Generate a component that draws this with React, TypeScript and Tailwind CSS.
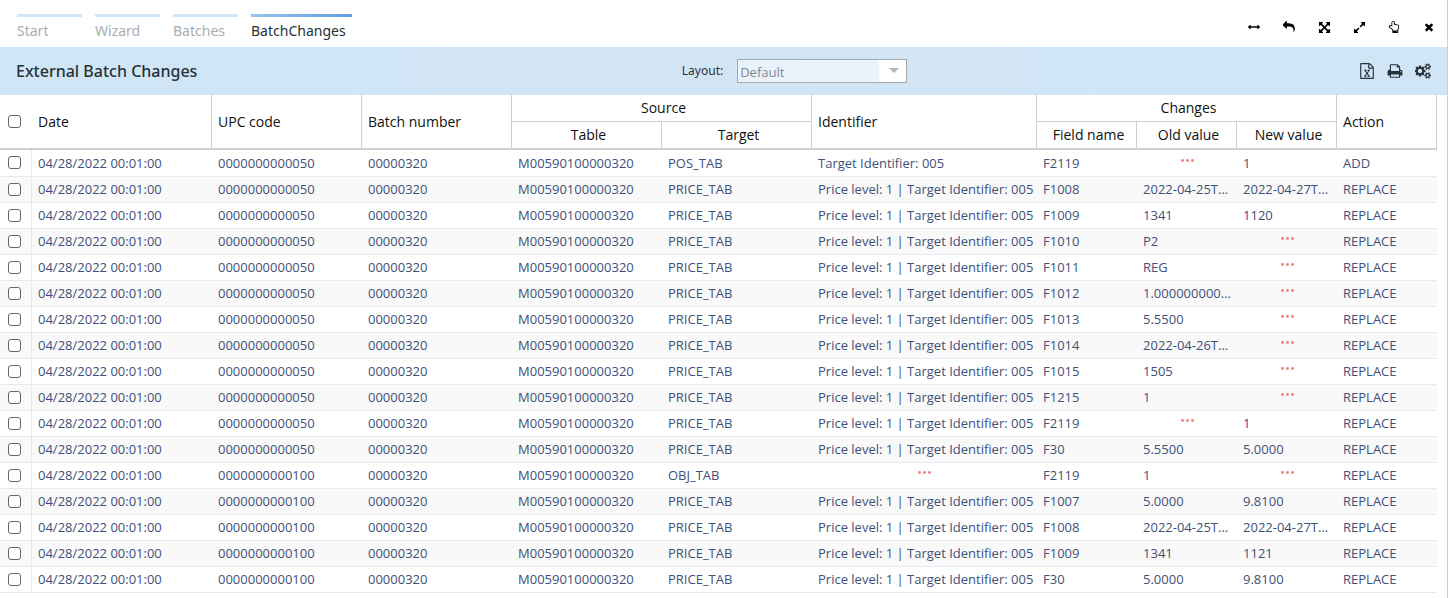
import type { ReactNode } from 'react';

const ICONS = {
  horizontal:
    'M1792 896q0 26-19 45l-256 256q-19 19-45 19t-45-19-19-45v-128h-1024v128q0 26-19 45t-45 19-45-19l-256-256q-19-19-19-45t19-45l256-256q19-19 45-19t45 19 19 45v128h1024v-128q0-26 19-45t45-19 45 19l256 256q19 19 19 45z',
  reply:
    'M1792 1120q0 166-127 451-3 7-10.5 24t-13.5 30-13 22q-12 17-28 17-15 0-23.5-10t-8.5-25q0-9 2.5-26.5t2.5-23.5q5-68 5-123 0-112-19.5-200.5t-54-153.5-89-112-117-80-146-48.5-166.5-24-189-6.5h-224v256q0 26-19 45t-45 19-45-19l-512-512q-19-19-19-45t19-45l512-512q19-19 45-19t45 19 19 45v256h224q713 0 875 403 53 134 53 333z',
  arrows:
    'M1411 541l-355 355 355 355 144-144q29-31 70-14 39 17 39 59v448q0 26-19 45t-45 19h-448q-42 0-59-40-17-39 14-69l144-144-355-355-355 355 144 144q31 30 14 69-17 40-59 40h-448q-26 0-45-19t-19-45v-448q0-42 40-59 39-17 69 14l144 144 355-355-355-355-144 144q-19 19-45 19-12 0-24-5-40-17-40-59v-448q0-26 19-45t45-19h448q42 0 59 40 17 39-14 69l-144 144 355 355 355-355-144-144q-31-30-14-69 17-40 59-40h448q26 0 45 19t19 45v448q0 42-39 59-13 5-25 5-26 0-45-19z',
  expand:
    'M883 1056q0 13-10 23l-332 332 144 144q19 19 19 45t-19 45-45 19h-448q-26 0-45-19t-19-45v-448q0-26 19-45t45-19 45 19l144 144 332-332q10-10 23-10t23 10l114 114q10 10 10 23zm781-864v448q0 26-19 45t-45 19-45-19l-144-144-332 332q-10 10-23 10t-23-10l-114-114q-10-10-10-23t10-23l332-332-144-144q-19-19-19-45t19-45 45-19h448q26 0 45 19t19 45z',
  hand:
    'M1408 1600q0-26-19-45t-45-19-45 19-19 45 19 45 45 19 45-19 19-45zm128-764q0-189-167-189-26 0-56 5-16-30-52.5-47.5t-73.5-17.5-69 18q-50-53-119-53-25 0-55.5 10t-47.5 25v-331q0-52-38-90t-90-38q-51 0-89.5 39t-38.5 89v576q-20 0-48.5-15t-55-33-68-33-84.5-15q-67 0-97.5 44.5t-30.5 115.5q0 24 139 90 44 24 65 37 64 40 145 112 81 71 106 101 57 69 57 140v32h640v-32q0-72 32-167t64-193.5 32-179.5zm128-5q0 133-69 322-59 164-59 223v288q0 53-37.5 90.5t-90.5 37.5h-640q-53 0-90.5-37.5t-37.5-90.5v-288q0-10-4.5-21.5t-14-23.5-18-22.5-22.5-24-21.5-20.5-21.5-19-17-14q-74-65-129-100-21-13-62-33t-72-37-63-40.5-49.5-55-17.5-69.5q0-125 67-206.5t189-81.5q68 0 128 22v-374q0-104 77-180t179-76q105 0 181 75.5t76 180.5v169q62 4 119 37 21-3 43-3 101 0 178 60 139-1 219.5 85t80.5 227z',
  close:
    'M1490 1322q0 40-28 68l-136 136q-28 28-68 28t-68-28l-294-294-294 294q-28 28-68 28t-68-28l-136-136q-28-28-28-68t28-68l294-294-294-294q-28-28-28-68t28-68l136-136q28-28 68-28t68 28l294 294 294-294q28-28 68-28t68 28l136 136q28 28 28 68t-28 68l-294 294 294 294q28 28 28 68z',
  excel:
    'M1596 380q28 28 48 76t20 88v1152q0 40-28 68t-68 28h-1344q-40 0-68-28t-28-68v-1600q0-40 28-68t68-28h896q40 0 88 20t76 48zm-444-244v376h376q-10-29-22-41l-313-313q-12-12-41-22zm384 1528v-1024h-416q-40 0-68-28t-28-68v-416h-768v1536h1280zm-979-234v106h281v-106h-75l103-161q5-7 10-16.5t7.5-13.5 3.5-4h2q1 4 5 10 2 4 4.5 7.5t6 8 6.5 8.5l107 161h-76v106h291v-106h-68l-192-273 195-282h67v-107h-279v107h74l-103 159q-4 7-10 16.5t-9 13.5l-2 3h-2q-1-4-5-10-6-11-17-23l-106-159h76v-107h-290v107h68l189 272-194 283h-68z',
  print:
    'M448 1536h896v-256h-896v256zm0-640h896v-384h-160q-40 0-68-28t-28-68v-160h-640v640zm1152 64q0-26-19-45t-45-19-45 19-19 45 19 45 45 19 45-19 19-45zm128 0v416q0 13-9.5 22.5t-22.5 9.5h-224v160q0 40-28 68t-68 28h-960q-40 0-68-28t-28-68v-160h-224q-13 0-22.5-9.5t-9.5-22.5v-416q0-79 56.5-135.5t135.5-56.5h64v-544q0-40 28-68t68-28h672q40 0 88 20t76 48l152 152q28 28 48 76t20 88v256h64q79 0 135.5 56.5t56.5 135.5z',
  cogs:
    'M832 896q0-106-75-181t-181-75-181 75-75 181 75 181 181 75 181-75 75-181zm768 512q0-52-38-90t-90-38-90 38-38 90q0 53 37.5 90.5t90.5 37.5 90.5-37.5 37.5-90.5zm0-1024q0-52-38-90t-90-38-90 38-38 90q0 53 37.5 90.5t90.5 37.5 90.5-37.5 37.5-90.5zm-384 421v185q0 10-7 19.5t-16 10.5l-155 24q-11 35-32 76 34 48 90 115 7 11 7 20 0 12-7 19-23 30-82.5 89.5t-78.5 59.5q-11 0-21-7l-115-90q-37 19-77 31-11 108-23 155-7 24-30 24h-186q-11 0-20-7.5t-10-17.5l-23-153q-34-10-75-31l-118 89q-7 7-20 7-11 0-21-8-144-133-144-160 0-9 7-19 10-14 41-53t47-61q-23-44-35-82l-152-24q-10-1-17-9.5t-7-19.5v-185q0-10 7-19.5t16-10.5l155-24q11-35 32-76-34-48-90-115-7-11-7-20 0-12 7-20 22-30 82-89t79-59q11 0 21 7l115 90q34-18 77-32 11-108 23-154 7-24 30-24h186q11 0 20 7.5t10 17.5l23 153q34 10 75 31l118-89q8-7 20-7 11 0 21 8 144 133 144 160 0 8-7 19-12 16-42 54t-45 60q23 48 34 82l152 23q10 2 17 10.5t7 19.5zm640 533v140q0 16-149 31-12 27-30 52 51 113 51 138 0 4-4 7-122 71-124 71-8 0-46-47t-52-68q-20 2-30 2t-30-2q-14 21-52 68t-46 47q-2 0-124-71-4-3-4-7 0-25 51-138-18-25-30-52-149-15-149-31v-140q0-16 149-31 13-29 30-52-51-113-51-138 0-4 4-7 4-2 35-20t59-34 30-16q8 0 46 46.5t52 67.5q20-2 30-2t30 2q51-71 92-112l6-2q4 0 124 70 4 3 4 7 0 25-51 138 17 23 30 52 149 15 149 31zm0-1024v140q0 16-149 31-12 27-30 52 51 113 51 138 0 4-4 7-122 71-124 71-8 0-46-47t-52-68q-20 2-30 2t-30-2q-14 21-52 68t-46 47q-2 0-124-71-4-3-4-7 0-25 51-138-18-25-30-52-149-15-149-31v-140q0-16 149-31 13-29 30-52-51-113-51-138 0-4 4-7 4-2 35-20t59-34 30-16q8 0 46 46.5t52 67.5q20-2 30-2t30 2q51-71 92-112l6-2q4 0 124 70 4 3 4 7 0 25-51 138 17 23 30 52 149 15 149 31z',
};

function Glyph({ name, className }: { name: keyof typeof ICONS; className: string }) {
  return (
    <svg viewBox={name === 'cogs' ? '0 0 1856 1792' : '0 0 1792 1792'} className={className} fill="currentColor" aria-hidden="true">
      <path d={ICONS[name]} />
    </svg>
  );
}

function IconButton({ label, children }: { label: string; children: ReactNode }) {
  return (
    <button type="button" aria-label={label} className="flex size-4 items-center justify-center">
      {children}
    </button>
  );
}

function Check({ label }: { label: string }) {
  return (
    <input
      type="checkbox"
      aria-label={label}
      className="block size-[13px] appearance-none rounded-[3px] border border-[#5a6a70] bg-white checked:bg-[#5a6a70]"
    />
  );
}

type Row = { upc: string; target: string; id: string; field: string; from: string; to: string; action: string };

const LEVEL = 'Price level: 1 | Target Identifier: 005';

const row = (upc: string, field: string, from: string, to: string, target = 'PRICE_TAB', id = LEVEL, action = 'REPLACE'): Row => ({
  upc: '0000000000' + upc,
  target,
  id,
  field,
  from,
  to,
  action,
});

const ROWS: Row[] = [
  row('050', 'F2119', '', '1', 'POS_TAB', 'Target Identifier: 005', 'ADD'),
  row('050', 'F1008', '2022-04-25T...', '2022-04-27T...'),
  row('050', 'F1009', '1341', '1120'),
  row('050', 'F1010', 'P2', ''),
  row('050', 'F1011', 'REG', ''),
  row('050', 'F1012', '1.000000000...', ''),
  row('050', 'F1013', '5.5500', ''),
  row('050', 'F1014', '2022-04-26T...', ''),
  row('050', 'F1015', '1505', ''),
  row('050', 'F1215', '1', ''),
  row('050', 'F2119', '', '1'),
  row('050', 'F30', '5.5500', '5.0000'),
  row('100', 'F2119', '1', '', 'OBJ_TAB', ''),
  row('100', 'F1007', '5.0000', '9.8100'),
  row('100', 'F1008', '2022-04-25T...', '2022-04-27T...'),
  row('100', 'F1009', '1341', '1121'),
  row('100', 'F30', '5.0000', '9.8100'),
];

function Cell({ value }: { value: string }) {
  if (!value) {
    return (
      <td className="border-b border-[#e6e9f0] p-0">
        <svg viewBox="0 0 13 3" className="mx-auto mb-1.5 h-[3px] w-[13px] fill-[#f08080]" role="img" aria-label="empty">
          <circle cx="1.5" cy="1.5" r="1.4" />
          <circle cx="6.5" cy="1.5" r="1.4" />
          <circle cx="11.5" cy="1.5" r="1.4" />
        </svg>
      </td>
    );
  }
  return <td className="truncate border-b border-[#e6e9f0] pt-0 pr-0 pb-px pl-1.5">{value}</td>;
}

const TABS = ['Start', 'Wizard', 'Batches'];
const HEAD = 'border-r border-b-2 border-[#cfcfcf] px-1.5 py-0 text-left font-normal';
const GROUP = 'h-[27px] border-r border-b border-[#cfcfcf] p-0 pl-1 text-center font-normal';
const SUB = 'h-7 border-r border-b-2 border-[#cfcfcf] p-0 pl-1 text-center font-normal';

export default function App() {
  return (
    <div className="min-h-screen border-r border-[#cfcfcf] bg-white font-['Noto_Sans','Open_Sans',sans-serif]">
      <header className="flex h-[47px] items-start justify-between pr-2.5 pl-[17px]">
        <nav className="flex gap-[13px] pt-3.5 text-sm leading-5">
          {TABS.map((t) => (
            <a key={t} href="#" className="w-[65px] border-t-3 border-[#cfe5f8] pt-1 text-[#a9adb1]">
              {t}
            </a>
          ))}
          <a href="#" aria-current="page" className="w-[101px] text-[#263238]">
            <span className="block h-[3px] bg-linear-to-r from-[#96c2ee] to-[#5f9fe0]" />
            <span className="block pt-1">BatchChanges</span>
          </a>
        </nav>
        <div className="flex gap-[19px] pt-[19px] text-black">
          <IconButton label="Fit width"><Glyph name="horizontal" className="size-3" /></IconButton>
          <IconButton label="Back"><Glyph name="reply" className="size-3" /></IconButton>
          <IconButton label="Full size"><Glyph name="arrows" className="size-[13px]" /></IconButton>
          <IconButton label="Expand"><Glyph name="expand" className="size-[13px]" /></IconButton>
          <IconButton label="Select"><Glyph name="hand" className="size-3" /></IconButton>
          <IconButton label="Close"><Glyph name="close" className="size-3" /></IconButton>
        </div>
      </header>

      <section className="grid h-12 grid-cols-[1fr_auto_1fr] items-center bg-linear-to-r from-[#cfe6f6] via-[#d2e5f5] to-[#cfe6f6] pr-4 pl-4 text-[#263238]">
        <h1 className="text-base font-medium">External Batch Changes</h1>
        <div className="flex items-center gap-3.5 pl-[142px]">
          <label htmlFor="layout" className="text-xs">
            Layout:
          </label>
          <div className="relative">
            <select
              id="layout"
              className="block h-6 w-[170px] appearance-none border border-[#a9a9a9] bg-linear-to-r from-[#eaf3fc] from-84% to-white to-84% pt-0.5 pl-[2px] font-['Open_Sans',sans-serif] text-[13px] leading-[18px] text-[#7b8a90]"
            >
              <option>Default</option>
            </select>
            <svg viewBox="0 0 10 5" className="pointer-events-none absolute top-[9px] right-2 h-[5px] w-2.5 fill-[#b5b5b5]" aria-hidden="true">
              <path d="M0 0h10L5 5z" />
            </svg>
          </div>
        </div>
        <div className="flex justify-end gap-3">
          <IconButton label="Export to Excel"><Glyph name="excel" className="size-4" /></IconButton>
          <IconButton label="Print"><Glyph name="print" className="size-4" /></IconButton>
          <IconButton label="Settings"><Glyph name="cogs" className="h-4 w-[17px]" /></IconButton>
        </div>
      </section>

      <div className="pr-2.5">
        <table className="w-full table-fixed border-separate border-spacing-0 font-['Open_Sans',sans-serif] text-[13px] leading-[18px] whitespace-nowrap text-[#3f5078]">
          <colgroup>
            <col className="w-8" />
            <col className="w-[180px]" />
            <col className="w-[150px]" />
            <col className="w-[150px]" />
            <col className="w-[150px]" />
            <col className="w-[150px]" />
            <col className="w-[225px]" />
            <col className="w-[100px]" />
            <col className="w-[100px]" />
            <col className="w-[100px]" />
            <col className="w-[100px]" />
          </colgroup>
          <thead className="text-sm leading-5 text-[#111]">
            <tr>
              <th rowSpan={2} className="border-b-2 border-[#cfcfcf] p-0 pl-2">
                <Check label="Select all" />
              </th>
              <th rowSpan={2} className={HEAD}>Date</th>
              <th rowSpan={2} className={HEAD}>UPC code</th>
              <th rowSpan={2} className={HEAD}>Batch number</th>
              <th colSpan={2} className={GROUP}>Source</th>
              <th rowSpan={2} className={HEAD}>Identifier</th>
              <th colSpan={3} className={GROUP}>Changes</th>
              <th rowSpan={2} className={HEAD}>Action</th>
            </tr>
            <tr>
              <th className={SUB}>Table</th>
              <th className={SUB}>Target</th>
              <th className={SUB}>Field name</th>
              <th className={SUB}>Old value</th>
              <th className={SUB}>New value</th>
            </tr>
          </thead>
          <tbody>
            {ROWS.map((r, i) => (
              <tr key={i} className="h-[26px] first:h-[27px] even:bg-[#f9f9f9]">
                <td className="border-r border-b border-[#e6e9f0] pt-0 pr-0 pb-px pl-2">
                  <Check label={`Select row ${i + 1}`} />
                </td>
                <Cell value="04/28/2022 00:01:00" />
                <Cell value={r.upc} />
                <Cell value="00000320" />
                <Cell value="M00590100000320" />
                <Cell value={r.target} />
                <Cell value={r.id} />
                <Cell value={r.field} />
                <Cell value={r.from} />
                <Cell value={r.to} />
                <Cell value={r.action} />
              </tr>
            ))}
          </tbody>
        </table>
      </div>
    </div>
  );
}
